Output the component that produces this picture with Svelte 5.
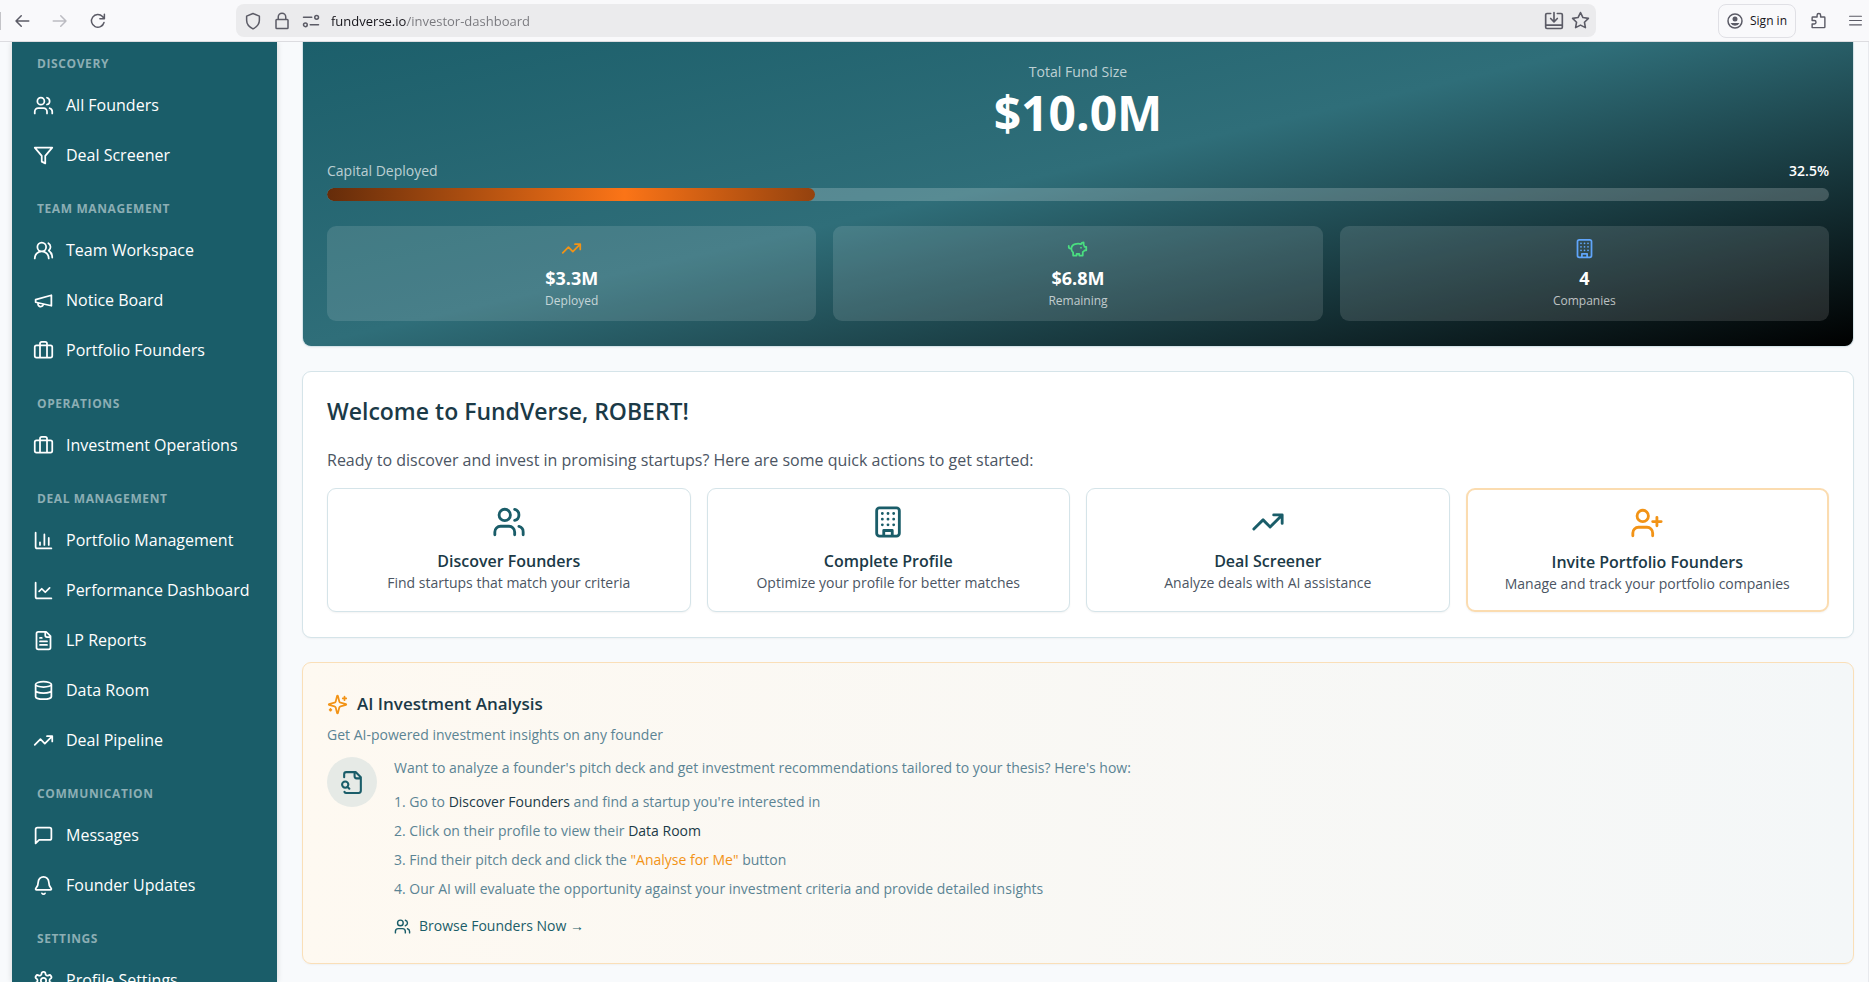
<script lang="ts">
	interface NavItem {
		label: string
		icon: string
	}

	interface NavGroup {
		title: string
		items: Array<NavItem>
	}

	// Stroke paths on a 24x24 grid

	const icons: Record<string, string> = {
		users: 'M16 21v-2a4 4 0 0 0-4-4H6a4 4 0 0 0-4 4v2 M5 7a4 4 0 1 0 8 0a4 4 0 1 0-8 0 M22 21v-2a4 4 0 0 0-3-3.87 M16 3.13a4 4 0 0 1 0 7.75',
		usersRound: 'M18 21a8 8 0 0 0-16 0 M5 8a5 5 0 1 0 10 0a5 5 0 1 0-10 0 M22 20c0-3.37-2-6.5-4-8a5 5 0 0 0-.45-8.3',
		userPlus: 'M16 21v-2a4 4 0 0 0-4-4H6a4 4 0 0 0-4 4v2 M5 7a4 4 0 1 0 8 0a4 4 0 1 0-8 0 M19 8v6 M22 11h-6',
		filter: 'M22 3H2l8 9.46V19l4 2v-8.54L22 3z',
		megaphone: 'm3 11 18-5v12L3 14v-3z M11.6 16.8a3 3 0 1 1-5.8-1.6',
		briefcase: 'M4 6h16a2 2 0 0 1 2 2v10a2 2 0 0 1-2 2H4a2 2 0 0 1-2-2V8a2 2 0 0 1 2-2z M16 20V4a2 2 0 0 0-2-2h-4a2 2 0 0 0-2 2v16',
		barChart: 'M3 3v16a2 2 0 0 0 2 2h16 M18 17V9 M13 17V5 M8 17v-3',
		lineChart: 'M3 3v16a2 2 0 0 0 2 2h16 m-2-12-5 5-4-4-3 3',
		file: 'M15 2H6a2 2 0 0 0-2 2v16a2 2 0 0 0 2 2h12a2 2 0 0 0 2-2V7Z M14 2v4a2 2 0 0 0 2 2h4 M10 9H8 M16 13H8 M16 17H8',
		database: 'M3 5a9 3 0 1 0 18 0a9 3 0 1 0-18 0 M3 5v14a9 3 0 0 0 18 0V5 M3 12a9 3 0 0 0 18 0',
		trending: 'm22 7-8.5 8.5-5-5L2 17 M16 7h6v6',
		message: 'M21 15a2 2 0 0 1-2 2H7l-4 4V5a2 2 0 0 1 2-2h14a2 2 0 0 1 2 2z',
		bell: 'M10.268 21a2 2 0 0 0 3.464 0 M3.262 15.326A1 1 0 0 0 4 17h16a1 1 0 0 0 .74-1.673C19.41 13.956 18 12.499 18 8A6 6 0 0 0 6 8c0 4.499-1.411 5.956-2.738 7.326',
		settings: 'M12.22 2h-.44a2 2 0 0 0-2 2v.18a2 2 0 0 1-1 1.73l-.43.25a2 2 0 0 1-2 0l-.15-.08a2 2 0 0 0-2.73.73l-.22.38a2 2 0 0 0 .73 2.73l.15.1a2 2 0 0 1 1 1.72v.51a2 2 0 0 1-1 1.74l-.15.09a2 2 0 0 0-.73 2.73l.22.38a2 2 0 0 0 2.73.73l.15-.08a2 2 0 0 1 2 0l.43.25a2 2 0 0 1 1 1.73V20a2 2 0 0 0 2 2h.44a2 2 0 0 0 2-2v-.18a2 2 0 0 1 1-1.73l.43-.25a2 2 0 0 1 2 0l.15.08a2 2 0 0 0 2.73-.73l.22-.39a2 2 0 0 0-.73-2.73l-.15-.08a2 2 0 0 1-1-1.74v-.5a2 2 0 0 1 1-1.74l.15-.09a2 2 0 0 0 .73-2.73l-.22-.38a2 2 0 0 0-2.73-.73l-.15.08a2 2 0 0 1-2 0l-.43-.25a2 2 0 0 1-1-1.73V4a2 2 0 0 0-2-2z M9 12a3 3 0 1 0 6 0a3 3 0 1 0-6 0',
		piggy: 'M19 5c-1.5 0-2.8 1.4-3 2-3.5-1.5-11-.3-11 5 0 1.8 0 3 2 4.5V20h4v-2h3v2h4v-4c1-.5 1.7-1 2-2h2v-4h-2c0-1-.5-1.5-1-2V5z M2 9v1c0 1.1.9 2 2 2h1 M16 11h.01',
		building: 'M6 2h12a2 2 0 0 1 2 2v16a2 2 0 0 1-2 2H6a2 2 0 0 1-2-2V4a2 2 0 0 1 2-2z M9 22v-4h6v4 M8 6h.01 M16 6h.01 M12 6h.01 M12 10h.01 M12 14h.01 M16 10h.01 M16 14h.01 M8 10h.01 M8 14h.01',
		sparkles: 'M9.937 15.5A2 2 0 0 0 8.5 14.063l-6.135-1.582a.5.5 0 0 1 0-.962L8.5 9.936A2 2 0 0 0 9.937 8.5l1.582-6.135a.5.5 0 0 1 .963 0L14.063 8.5A2 2 0 0 0 15.5 9.937l6.135 1.581a.5.5 0 0 1 0 .964L15.5 14.063a2 2 0 0 0-1.437 1.437l-1.582 6.135a.5.5 0 0 1-.963 0z M20 3v4 M22 5h-4 M4 17v2 M5 18H3',
		fileSearch: 'M14 2v4a2 2 0 0 0 2 2h4 M4.268 21a2 2 0 0 0 1.727 1H18a2 2 0 0 0 2-2V7l-5-5H6a2 2 0 0 0-2 2v3 m5 11-1.5-1.5 M2 14a3 3 0 1 0 6 0a3 3 0 1 0-6 0',
		back: 'M21 12H4 M11 5l-7 7 7 7',
		forward: 'M3 12h17 M13 5l7 7-7 7',
		reload: 'M20 14a8.5 8.5 0 1 1-2-8l2 2.5 M20.5 3v6h-6',
		shield: 'M12 2l8.5 3.5v5.5c0 5-3.5 9-8.5 11.5c-5-2.5-8.5-6.5-8.5-11.5V5.5z',
		lock: 'M5 10h14a1 1 0 0 1 1 1v10a1 1 0 0 1-1 1H5a1 1 0 0 1-1-1V11a1 1 0 0 1 1-1z M7 10V6.5a5 5 0 0 1 10 0V10',
		tune: 'M2 7h11 M17 7a2.5 2.5 0 1 0 5 0a2.5 2.5 0 1 0-5 0 M11 17h11 M2 17a2.5 2.5 0 1 0 5 0a2.5 2.5 0 1 0-5 0',
		save: 'M8 3H3.500A1.500 1.500 0 0 0 2 4.500v15A1.500 1.500 0 0 0 3.500 21h17a1.500 1.500 0 0 0 1.500-1.500v-15A1.500 1.500 0 0 0 20.500 3H16 M2 17h20 M12 2v10 M8 9l4 4 4-4',
		star: 'M12 2l3.1 6.3 6.9 1-5 4.9 1.2 6.8-6.2-3.2L5.8 21 7 14.2 2 9.3l6.9-1z',
		puzzle: 'M3 22h17a1 1 0 0 0 1-1V8a1 1 0 0 0-1-1h-5V4.500a2.500 2.500 0 0 0-5 0V7H4a1 1 0 0 0-1 1v4h3a2.500 2.500 0 0 1 0 5H3z',
		menu: 'M1 4h22 M1 12h22 M1 20h22'
	}

	const navGroups: Array<NavGroup> = [
		{
			title: 'Discovery',
			items: [
				{ label: 'All Founders', icon: 'users' },
				{ label: 'Deal Screener', icon: 'filter' }
			]
		},
		{
			title: 'Team Management',
			items: [
				{ label: 'Team Workspace', icon: 'usersRound' },
				{ label: 'Notice Board', icon: 'megaphone' },
				{ label: 'Portfolio Founders', icon: 'briefcase' }
			]
		},
		{
			title: 'Operations',
			items: [{ label: 'Investment Operations', icon: 'briefcase' }]
		},
		{
			title: 'Deal Management',
			items: [
				{ label: 'Portfolio Management', icon: 'barChart' },
				{ label: 'Performance Dashboard', icon: 'lineChart' },
				{ label: 'LP Reports', icon: 'file' },
				{ label: 'Data Room', icon: 'database' },
				{ label: 'Deal Pipeline', icon: 'trending' }
			]
		},
		{
			title: 'Communication',
			items: [
				{ label: 'Messages', icon: 'message' },
				{ label: 'Founder Updates', icon: 'bell' }
			]
		},
		{
			title: 'Settings',
			items: [{ label: 'Profile Settings', icon: 'settings' }]
		}
	]

	const deployed: number = 32.5

	const stats = [
		{ value: '$3.3M', label: 'Deployed', icon: 'trending', tone: 'orange' },
		{ value: '$6.8M', label: 'Remaining', icon: 'piggy', tone: 'green' },
		{ value: '4', label: 'Companies', icon: 'building', tone: 'blue' }
	]

	const actions = [
		{ title: 'Discover Founders', text: 'Find startups that match your criteria', icon: 'users' },
		{ title: 'Complete Profile', text: 'Optimize your profile for better matches', icon: 'building' },
		{ title: 'Deal Screener', text: 'Analyze deals with AI assistance', icon: 'trending' },
		{
			title: 'Invite Portfolio Founders',
			text: 'Manage and track your portfolio companies',
			icon: 'userPlus',
			highlight: true
		}
	]

	let address: string = $state('fundverse.io/investor-dashboard')
</script>

{#snippet icon(name: string, size: number, stroke: number = 2)}
	<svg
		width={size}
		height={size}
		viewBox="0 0 24 24"
		fill="none"
		stroke="currentColor"
		stroke-width={stroke}
		stroke-linecap="round"
		stroke-linejoin="round"
		aria-hidden="true"
	>
		<path d={icons[name]} />
	</svg>
{/snippet}

<div class="window">
	<header class="toolbar">
		<div class="history">
			<button aria-label="Back">{@render icon('back', 18)}</button>
			<button aria-label="Forward" disabled>{@render icon('forward', 18)}</button>
			<button aria-label="Reload">{@render icon('reload', 18)}</button>
		</div>
		<div class="addressBar">
			<button aria-label="Tracking protection">{@render icon('shield', 18)}</button>
			<button aria-label="Connection">{@render icon('lock', 18)}</button>
			<button aria-label="Permissions">{@render icon('tune', 18)}</button>
			<input type="text" aria-label="Address" bind:value={address} />
			<button aria-label="Install">{@render icon('save', 20)}</button>
			<button aria-label="Bookmark">{@render icon('star', 19)}</button>
		</div>
		<div class="tools">
			<button class="signIn">
				<svg width="16" height="16" viewBox="0 0 16 16" aria-hidden="true">
					<circle cx="8" cy="8" r="7" fill="none" stroke="currentColor" stroke-width="1.5" />
					<circle cx="8" cy="6" r="2.5" fill="currentColor" />
					<path d="M3.5 10h9a5 5 0 0 1-9 0z" fill="currentColor" />
				</svg>
				<span>Sign in</span>
			</button>
			<button class="tool" aria-label="Extensions">{@render icon('puzzle', 17)}</button>
			<button class="tool" aria-label="Menu">{@render icon('menu', 13)}</button>
		</div>
	</header>

	<div class="page">
		<nav class="sidebar">
			{#each navGroups as group}
				<section>
					<h2>{group.title}</h2>
					{#each group.items as item}
						<a href="#{item.icon}">
							{@render icon(item.icon, 21)}
							{item.label}
						</a>
					{/each}
				</section>
			{/each}
		</nav>

		<main>
			<section class="fund">
				<p class="fundLabel">Total Fund Size</p>
				<p class="fundSize">$10.0M</p>
				<div class="fundRow">
					<span>Capital Deployed</span>
					<strong>{deployed}%</strong>
				</div>
				<div class="track">
					<div class="fill" style:width={`${deployed}%`}></div>
				</div>
				<div class="stats">
					{#each stats as stat}
						<div class="stat">
							<span class={stat.tone}>{@render icon(stat.icon, 21)}</span>
							<strong>{stat.value}</strong>
							<small>{stat.label}</small>
						</div>
					{/each}
				</div>
			</section>

			<section class="welcome">
				<h1>Welcome to FundVerse, ROBERT!</h1>
				<p>Ready to discover and invest in promising startups? Here are some quick actions to get started:</p>
				<div class="actions">
					{#each actions as action}
						<button class="action" class:highlight={action.highlight}>
							{@render icon(action.icon, 34)}
							<strong>{action.title}</strong>
							<small>{action.text}</small>
						</button>
					{/each}
				</div>
			</section>

			<section class="analysis">
				<h2><span class="orange">{@render icon('sparkles', 21)}</span> AI Investment Analysis</h2>
				<p>Get AI-powered investment insights on any founder</p>
				<div class="guide">
					<div class="badge">{@render icon('fileSearch', 25)}</div>
					<div class="steps">
						<p>
							Want to analyze a founder's pitch deck and get investment recommendations tailored to your
							thesis? Here's how:
						</p>
						<ol>
							<li>Go to <b>Discover Founders</b> and find a startup you're interested in</li>
							<li>Click on their profile to view their <b>Data Room</b></li>
							<li>Find their pitch deck and click the <span class="orange">"Analyse for Me"</span> button</li>
							<li>Our AI will evaluate the opportunity against your investment criteria and provide detailed insights</li>
						</ol>
						<a href="#founders">{@render icon('users', 17)} Browse Founders Now →</a>
					</div>
				</div>
			</section>
		</main>
	</div>
</div>

<style>
	:global(body) {
		overflow: hidden;
	}

	.window {
		--teal: #1a5d69;
		--orange: #f29316;
		--ink: #1b3a47;
		height: 100vh;
		display: flex;
		flex-direction: column;
		overflow: hidden;
		background-color: #f8fafc;
		font-family: 'Open Sans', 'Noto Sans', sans-serif;
		font-size: 14px;
		line-height: 22px;
	}

	.window * {
		box-sizing: border-box;
	}

	h1,
	h2,
	p,
	ol {
		margin: 0;
		padding: 0;
	}

	button {
		padding: 0;
		border: none;
		background: none;
		color: inherit;
		font: inherit;
	}

	svg {
		display: block;
		flex-shrink: 0;
	}

	.toolbar {
		flex-shrink: 0;
		height: 42px;
		display: flex;
		align-items: center;
		border-bottom: 1px solid #dcdce0;
		background-color: #f9f9fb;
		color: #5b5b66;
	}

	.history {
		width: 236px;
		display: flex;
		gap: 20px;
		padding-left: 12px;
		border-left: 1px solid #c4c4c8;
	}

	.history button:disabled {
		color: #bcbcc2;
	}

	.addressBar {
		flex: 1;
		height: 33px;
		display: flex;
		align-items: center;
		gap: 11px;
		padding: 0 6px 0 8px;
		border-radius: 8px;
		background-color: #ebebed;
	}

	.addressBar button:last-child {
		margin-left: -4px;
	}

	.addressBar input {
		flex: 1;
		min-width: 0;
		height: 24px;
		padding: 0;
		border: none;
		outline: none;
		background: linear-gradient(to right, #15141a 76px, #77777c 76px);
		background-clip: text;
		color: transparent;
		font: inherit;
		font-size: 13px;
	}

	.tools {
		width: 273px;
		display: flex;
		align-items: center;
		justify-content: flex-end;
		padding-right: 7px;
	}

	.signIn {
		height: 34px;
		display: flex;
		align-items: center;
		gap: 7px;
		margin-right: 14px;
		padding: 0 8px;
		border: 1px solid #e0e0e5;
		border-radius: 8px;
		font-size: 12px;
	}

	.signIn span {
		color: #15141a;
	}

	.tool + .tool {
		margin-left: 22px;
	}

	.page {
		flex: 1;
		min-height: 0;
		display: flex;
		overflow: hidden;
		padding-left: 12px;
		border-right: 1px solid #e8eaee;
	}

	.sidebar {
		width: 265px;
		flex-shrink: 0;
		padding: 14px 21px 0;
		background-color: var(--teal);
		box-shadow: 0 0 6px rgba(0, 0, 0, 0.15);
		color: #fff;
	}

	.sidebar section + section {
		margin-top: 21px;
	}

	.sidebar h2 {
		padding: 0 4px 8px;
		color: #8caeb4;
		font-size: 12px;
		font-weight: 700;
		letter-spacing: 0.05em;
		line-height: 16px;
		text-transform: uppercase;
	}

	.sidebar a {
		height: 50px;
		display: flex;
		align-items: center;
		gap: 12px;
		color: inherit;
		font-size: 16px;
		text-decoration: none;
		white-space: nowrap;
	}

	main {
		flex: 1;
		min-width: 0;
		padding: 0 14px 0 25px;
	}

	main > section {
		margin-bottom: 24px;
		padding: 24px 24px 25px;
		border: 1px solid #d5e4e9;
		border-radius: 9px;
		background-color: #fff;
		box-shadow: 0 1px 2px rgba(0, 0, 0, 0.04);
	}

	main > .fund {
		padding-top: 19px;
		border-top: none;
		border-radius: 0 0 9px 9px;
		background: linear-gradient(167deg, #1c5f6b, #2f6e79 46%, #000);
		color: #fff;
	}

	.fundLabel {
		color: rgba(255, 255, 255, 0.7);
		text-align: center;
	}

	.fundSize {
		font-size: 48px;
		font-weight: 700;
		line-height: 60px;
		text-align: center;
	}

	.fundRow {
		display: flex;
		justify-content: space-between;
		padding: 17px 0 6px;
	}

	.fundRow span {
		color: rgba(255, 255, 255, 0.7);
	}

	.fundRow strong {
		font-weight: 600;
	}

	.track {
		height: 13px;
		overflow: hidden;
		border-radius: 7px;
		background-color: rgba(255, 255, 255, 0.2);
	}

	.fill {
		height: 100%;
		border-radius: 7px;
		background: linear-gradient(to right, #652c0a, #fb7417 61%, #94420e);
	}

	.stats {
		display: grid;
		grid-template-columns: repeat(3, 1fr);
		gap: 17px;
		margin-top: 25px;
	}

	.stat {
		display: flex;
		flex-direction: column;
		align-items: center;
		padding: 12px 12px 11px;
		border-radius: 9px;
		background-color: rgba(255, 255, 255, 0.12);
	}

	.stat strong {
		margin-top: 7px;
		font-size: 18px;
		line-height: 24px;
	}

	.stat small {
		margin-top: 2px;
		color: rgba(255, 255, 255, 0.7);
		font-size: 12px;
		line-height: 18px;
	}

	.orange {
		color: var(--orange);
	}

	.green {
		color: #4ade80;
	}

	.blue {
		color: #60a5fa;
	}

	.welcome h1 {
		color: var(--ink);
		font-size: 23px;
		font-weight: 600;
		line-height: 30px;
	}

	.welcome p {
		margin: 22px 0 15px;
		color: #4b5563;
		font-size: 16px;
		line-height: 25px;
	}

	.actions {
		display: grid;
		grid-template-columns: repeat(4, 1fr);
		gap: 16px;
	}

	.action {
		height: 124px;
		display: flex;
		flex-direction: column;
		align-items: center;
		padding: 16px 16px 18px;
		border: 1px solid #d5e4e9;
		border-radius: 9px;
		background-color: #fff;
		box-shadow: 0 1px 2px rgba(0, 0, 0, 0.05);
		color: var(--teal);
	}

	.action strong {
		margin-top: 10px;
		color: var(--ink);
		font-size: 16px;
		font-weight: 600;
		line-height: 24px;
	}

	.action small {
		color: #4b5563;
		font-size: 14px;
		line-height: 20px;
	}

	.highlight {
		border: 2px solid #fbdcb0;
		color: var(--orange);
	}

	main > .analysis {
		border-color: #fadfb8;
		background: linear-gradient(to right, #fef9f1, #f4f7f8);
		color: #5b8494;
	}

	.analysis h2 {
		display: flex;
		align-items: center;
		gap: 9px;
		margin-bottom: 3px;
		color: var(--ink);
		font-size: 17px;
		font-weight: 600;
		line-height: 34px;
	}

	.guide {
		display: flex;
		gap: 17px;
		margin-top: 11px;
	}

	.badge {
		width: 50px;
		height: 50px;
		flex-shrink: 0;
		display: grid;
		place-items: center;
		border-radius: 50%;
		background-color: #e6eae6;
		color: var(--teal);
	}

	.steps ol {
		display: grid;
		gap: 7px;
		margin: 12px 0 14px;
		list-style-position: inside;
	}

	.steps b {
		color: var(--ink);
		font-weight: 500;
	}

	.steps a {
		display: flex;
		align-items: center;
		gap: 8px;
		color: var(--teal);
		line-height: 24px;
		text-decoration: none;
	}
</style>
